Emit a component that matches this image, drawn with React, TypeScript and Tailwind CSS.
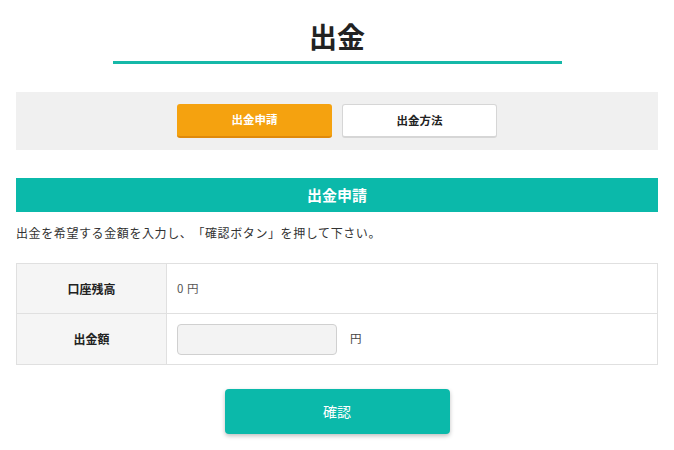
export default function App() {
  const font = {
    fontFamily: '"Noto Sans CJK JP", "Noto Sans", sans-serif',
  };
  return (
    <div className="min-h-[450px] w-[674px] bg-white text-[#333] [text-spacing-trim:space-all]" style={font}>
      <div className="pt-[16px] text-center">
        <h1 className="text-[28px] leading-[40px] font-bold text-[#222]">出金</h1>
      </div>
      <div className="mx-auto mt-[5px] h-[3px] w-[449px] bg-[#16b8a8]" />

      <div className="mx-[16px] mt-[28px] flex h-[58px] items-center justify-center gap-[10px] bg-[#f0f0f0]">
        <button
          type="button"
          className="h-[34px] w-[155px] rounded-[3px] border-b-2 border-[#e08a0a] bg-[#f5a20f] text-[11.5px] font-bold text-white"
        >
          出金申請
        </button>
        <button
          type="button"
          className="h-[34px] w-[155px] rounded-[3px] border border-b-2 border-[#d6d6d6] bg-white text-[11.5px] font-bold text-[#222]"
        >
          出金方法
        </button>
      </div>

      <div className="mx-[16px] mt-[28px] flex h-[34px] items-center justify-center bg-[#0bb9aa] text-[15px] font-bold text-white">
        出金申請
      </div>

      <p className="mx-[16px] mt-[12px] text-[12px] leading-[18px] tracking-[0.6px] text-[#333]">
        出金を希望する金額を入力し、「確認ボタン」を押して下さい。
      </p>

      <div className="mx-[16px] mt-[21px] border border-[#e0e0e0]">
        <div className="flex h-[50px] border-b border-[#e0e0e0]">
          <div className="flex w-[150px] items-center justify-center border-r border-[#e0e0e0] bg-[#f5f5f5] text-[12px] font-bold text-[#222]">
            口座残高
          </div>
          <div className="flex flex-1 items-center pl-[10px] text-[11.5px] tracking-[0.5px] text-[#555]">
            0&nbsp;円
          </div>
        </div>
        <div className="flex h-[50px]">
          <div className="flex w-[150px] items-center justify-center border-r border-[#e0e0e0] bg-[#f5f5f5] text-[12px] font-bold text-[#222]">
            出金額
          </div>
          <div className="flex flex-1 items-center gap-[13px] pl-[10px] text-[11.5px] text-[#444]">
            <input
              type="text"
              className="h-[31px] w-[160px] rounded-[4px] border border-[#d0d0d0] bg-[#f3f3f3] outline-none"
            />
            <span>円</span>
          </div>
        </div>
      </div>

      <div className="mt-[24px] flex justify-center">
        <button
          type="button"
          className="h-[45px] w-[225px] rounded-[4px] bg-[#0bb9aa] text-[14px] text-white shadow-[0_2px_4px_rgba(0,0,0,0.25)]"
        >
          確認
        </button>
      </div>
    </div>
  );
}
